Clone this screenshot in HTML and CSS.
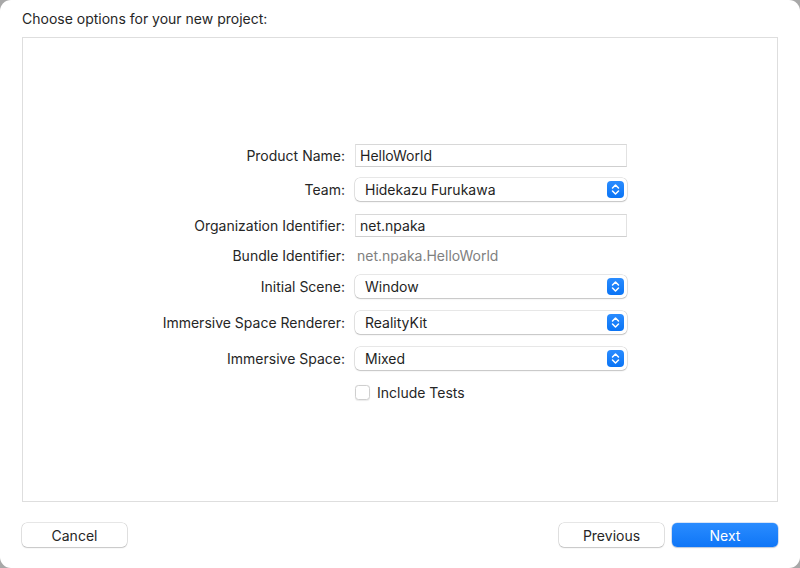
FILE: index.html
```html
<!DOCTYPE html>
<html lang="en">
<head>
<meta charset="utf-8">
<title>Choose options</title>
<link rel="stylesheet" href="styles.css">
</head>
<body>
<div class="window">
  <div class="title">Choose options for your new project:</div>
  <div class="box">
    <div class="form">
      <div class="label">Product Name:</div>
      <div class="field">HelloWorld</div>

      <div class="label">Team:</div>
      <div class="popup"><span>Hidekazu Furukawa</span><span class="stepper"><svg width="9" height="13" viewBox="0 0 9 13"><path d="M1.5 5 L4.5 2 L7.5 5 M1.5 8 L4.5 11 L7.5 8" fill="none" stroke="#fff" stroke-width="1.5" stroke-linecap="round" stroke-linejoin="round"/></svg></span></div>

      <div class="label">Organization Identifier:</div>
      <div class="field">net.npaka</div>

      <div class="label">Bundle Identifier:</div>
      <div class="value">net.npaka.HelloWorld</div>

      <div class="label">Initial Scene:</div>
      <div class="popup"><span>Window</span><span class="stepper"><svg width="9" height="13" viewBox="0 0 9 13"><path d="M1.5 5 L4.5 2 L7.5 5 M1.5 8 L4.5 11 L7.5 8" fill="none" stroke="#fff" stroke-width="1.5" stroke-linecap="round" stroke-linejoin="round"/></svg></span></div>

      <div class="label">Immersive Space Renderer:</div>
      <div class="popup"><span>RealityKit</span><span class="stepper"><svg width="9" height="13" viewBox="0 0 9 13"><path d="M1.5 5 L4.5 2 L7.5 5 M1.5 8 L4.5 11 L7.5 8" fill="none" stroke="#fff" stroke-width="1.5" stroke-linecap="round" stroke-linejoin="round"/></svg></span></div>

      <div class="label">Immersive Space:</div>
      <div class="popup"><span>Mixed</span><span class="stepper"><svg width="9" height="13" viewBox="0 0 9 13"><path d="M1.5 5 L4.5 2 L7.5 5 M1.5 8 L4.5 11 L7.5 8" fill="none" stroke="#fff" stroke-width="1.5" stroke-linecap="round" stroke-linejoin="round"/></svg></span></div>

      <div class="label"></div>
      <label class="check"><span class="checkbox"></span><span>Include Tests</span></label>
    </div>
  </div>
  <div class="buttons">
    <button class="btn">Cancel</button>
    <div class="right">
      <button class="btn">Previous</button>
      <button class="btn primary">Next</button>
    </div>
  </div>
</div>
</body>
</html>
```

FILE: styles.css
```css
* { box-sizing: border-box; }
html, body { margin: 0; padding: 0; }
body {
  background: #a8a8a8;
  width: 800px;
  height: 568px;
  overflow: hidden;
  font-family: Inter, "Liberation Sans", sans-serif;
  font-size: 14px;
  color: #262626;
}
.window {
  width: 800px;
  height: 568px;
  background: #ffffff;
  border-radius: 11px;
  padding: 9px 22px 0 22px;
  display: flex;
  flex-direction: column;
}
.title {
  height: 19px;
  line-height: 19px;
  font-size: 14px;
  color: #262626;
}
.box {
  margin-top: 9px;
  height: 465px;
  border: 1px solid #dedede;
  background: #fff;
  padding-top: 100px;
}
.form {
  display: grid;
  grid-template-columns: 322px 272px;
  grid-template-rows: 34px 34px 38px 22px 40px 32px 40px 28px;
  column-gap: 10px;
  align-items: center;
}
.label {
  text-align: right;
  white-space: nowrap;
}
.field {
  height: 23px;
  line-height: 22px;
  padding-left: 4px;
  border: 1px solid #e2e2e2;
  border-top-color: #d8d8d8;
  border-bottom-color: #cfcfcf;
  background: #fff;
  color: #1f1f1f;
}
.value {
  color: #808080;
  padding-left: 2px;
}
.popup {
  height: 23px;
  border-radius: 5px;
  background: #fff;
  box-shadow: 0 0 0 0.5px rgba(0,0,0,0.18), 0 1px 1.5px rgba(0,0,0,0.16);
  display: flex;
  align-items: center;
  justify-content: space-between;
  padding-left: 10px;
  padding-right: 3px;
  color: #1f1f1f;
}
.stepper {
  width: 17px;
  height: 17px;
  border-radius: 4px;
  background: linear-gradient(#2a8cff, #0a74f5);
  display: flex;
  align-items: center;
  justify-content: center;
}
.check {
  display: flex;
  align-items: center;
  gap: 7px;
  color: #262626;
}
.checkbox {
  width: 15px;
  height: 15px;
  border-radius: 3.5px;
  border: 1px solid #cfcfcf;
  background: #fff;
  box-shadow: 0 0.5px 1px rgba(0,0,0,0.08);
}
.buttons {
  margin-top: 21px;
  display: flex;
  justify-content: space-between;
}
.right {
  display: flex;
  gap: 8px;
}
.btn {
  width: 105px;
  height: 24px;
  border: none;
  border-radius: 5px;
  background: #fff;
  box-shadow: 0 0 0 0.5px rgba(0,0,0,0.2), 0 1px 1.5px rgba(0,0,0,0.14);
  font-family: Inter, "Liberation Sans", sans-serif;
  font-size: 14px;
  color: #262626;
  padding: 0;
}
.btn.primary {
  width: 106px;
  background: linear-gradient(#2a8cff, #0f76f7);
  color: #fff;
  box-shadow: 0 0 0 0.5px rgba(0,80,200,0.3), 0 1px 1.5px rgba(0,0,0,0.14);
}
```
